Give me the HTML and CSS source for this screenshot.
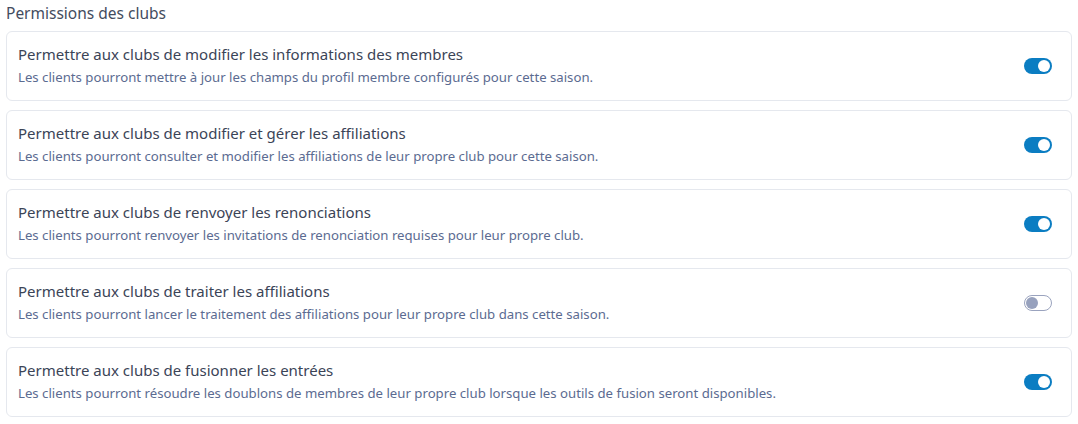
FILE: index.html
```html
<!DOCTYPE html>
<html lang="fr">
<head>
<meta charset="utf-8">
<link rel="stylesheet" href="styles.css">
</head>
<body>
<div class="section">
  <div class="section-title">Permissions des clubs</div>
  <div class="list">
    <div class="card">
      <div class="text">
        <div class="title">Permettre aux clubs de modifier les informations des membres</div>
        <div class="desc">Les clients pourront mettre à jour les champs du profil membre configurés pour cette saison.</div>
      </div>
      <span class="toggle on"><span class="knob"></span></span>
    </div>
    <div class="card">
      <div class="text">
        <div class="title">Permettre aux clubs de modifier et gérer les affiliations</div>
        <div class="desc">Les clients pourront consulter et modifier les affiliations de leur propre club pour cette saison.</div>
      </div>
      <span class="toggle on"><span class="knob"></span></span>
    </div>
    <div class="card">
      <div class="text">
        <div class="title">Permettre aux clubs de renvoyer les renonciations</div>
        <div class="desc">Les clients pourront renvoyer les invitations de renonciation requises pour leur propre club.</div>
      </div>
      <span class="toggle on"><span class="knob"></span></span>
    </div>
    <div class="card">
      <div class="text">
        <div class="title">Permettre aux clubs de traiter les affiliations</div>
        <div class="desc">Les clients pourront lancer le traitement des affiliations pour leur propre club dans cette saison.</div>
      </div>
      <span class="toggle off"><span class="knob"></span></span>
    </div>
    <div class="card">
      <div class="text">
        <div class="title">Permettre aux clubs de fusionner les entrées</div>
        <div class="desc">Les clients pourront résoudre les doublons de membres de leur propre club lorsque les outils de fusion seront disponibles.</div>
      </div>
      <span class="toggle on"><span class="knob"></span></span>
    </div>
  </div>
</div>
</body>
</html>
```
FILE: styles.css
```css
html, body {
  margin: 0;
  padding: 0;
  background: #ffffff;
}
body {
  font-family: "Noto Sans", "Open Sans", sans-serif;
  color: #3a4356;
}
.section {
  padding: 2px 6px 0 6px;
}
.section-title {
  font-size: 15.5px;
  line-height: 22px;
  color: #434c5e;
  margin-bottom: 7px;
}
.list {
  display: flex;
  flex-direction: column;
  gap: 9px;
}
.card {
  height: 70px;
  box-sizing: border-box;
  border: 1px solid #e5e8ee;
  border-radius: 6px;
  display: flex;
  align-items: center;
  justify-content: space-between;
  padding: 0 19px 0 11px;
}
.text {
  display: flex;
  flex-direction: column;
  gap: 4px;
  margin-top: -2px;
}
.title {
  font-size: 15px;
  line-height: 20px;
  color: #3b4457;
}
.desc {
  font-size: 13.2px;
  line-height: 18px;
  color: #5b6b91;
}
.toggle {
  width: 28px;
  height: 16px;
  box-sizing: border-box;
  border-radius: 8px;
  display: flex;
  align-items: center;
  padding: 0 2px;
  margin-top: 0;
}
.toggle .knob {
  width: 12px;
  height: 12px;
  border-radius: 50%;
}
.toggle.on {
  background: #0b7dc2;
  justify-content: flex-end;
}
.toggle.on .knob {
  background: #ffffff;
}
.toggle.off {
  background: #ffffff;
  border: 1px solid #9aa3be;
  justify-content: flex-start;
  padding: 0 1px;
}
.toggle.off .knob {
  background: #97a1bd;
}
```
